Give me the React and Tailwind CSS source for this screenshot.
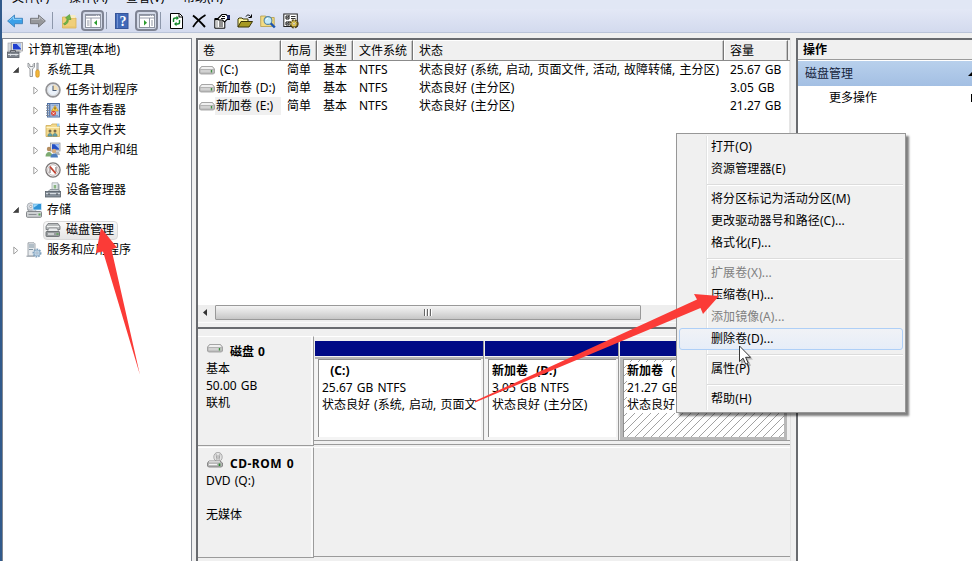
import React from "react";
import clsx from "clsx";

const volumes = [
    { name: " (C:)", status: "状态良好 (系统, 启动, 页面文件, 活动, 故障转储, 主分区)", size: "25.67 GB" },
    { name: "新加卷 (D:)", status: "状态良好 (主分区)", size: "3.05 GB" },
    { name: "新加卷 (E:)", status: "状态良好 (主分区)", size: "21.27 GB", selected: true },
];

const menuGroups = [
    [{ text: "打开(O)" }, { text: "资源管理器(E)" }],
    [{ text: "将分区标记为活动分区(M)" }, { text: "更改驱动器号和路径(C)..." }, { text: "格式化(F)..." }],
    [
        { text: "扩展卷(X)...", disabled: true },
        { text: "压缩卷(H)..." },
        { text: "添加镜像(A)...", disabled: true },
        { text: "删除卷(D)...", active: true },
    ],
    [{ text: "属性(P)" }],
    [{ text: "帮助(H)" }],
];

function Svg({ children, className = "w-4 h-4" }) {
    return (
        <svg viewBox="0 0 16 16" className={clsx("shrink-0", className)} fill="none">
            {children}
        </svg>
    );
}

/* ---------- tree icons ---------- */

const ComputerIcon = () => (
    <Svg>
        <rect x="4.5" y="0.5" width="11" height="8.5" fill="#e4e4dc" stroke="#9a9aa0" strokeWidth=".8" />
        <rect x="6" y="1.800" width="8" height="5.700" fill="#1f3fd0" />
        <path d="M9.500 1.800H14v5z" fill="#a9c4f8" />
        <rect x="1" y="1" width="3" height="8" fill="#d5d9dd" stroke="#9a9fa6" strokeWidth=".6" />
        <path d="M8 9h5l1.500 2H8z" fill="#c3c6cb" />
        <path d="M3.500 10V8.500h5V10" stroke="#5d6169" />
        <rect x="0.500" y="10" width="11.500" height="5.500" fill="#7f858e" stroke="#575c65" strokeWidth=".8" />
        <path d="M1 12.500h10.500M3.500 11.800v2M9 11.800v2" stroke="#dfe3e8" />
    </Svg>
);

const ToolsIcon = () => (
    <Svg>
        <path d="M2 1v4l2 2v7.500h2.500V7l2-2V1L7 2.500V4.500H3.800V2.500z" fill="#eceef0" stroke="#808488" strokeWidth=".8" />
        <path d="M10.800 1h1.400v7h-1.400z" fill="#c8ccd2" stroke="#85888d" strokeWidth=".6" />
        <rect x="9.800" y="8" width="3.400" height="7.200" rx="1.500" fill="#f3b73a" stroke="#c98a1c" strokeWidth=".7" />
    </Svg>
);

const ClockIcon = () => (
    <Svg>
        <circle cx="8" cy="8" r="6.900" fill="#fff" stroke="#949497" strokeWidth="1.700" />
        <circle cx="8" cy="8" r="5.500" fill="#eaf1f9" stroke="#c5c7ca" strokeWidth=".7" />
        <path d="M8 8h5.200A5.300 5.300 0 0 0 8 2.700z" fill="#f3dfb6" />
        <path d="M8 3.800V8.500H11.500" stroke="#51627a" strokeWidth="1.100" />
    </Svg>
);

const EventIcon = () => (
    <Svg>
        <rect x="2.500" y="1.500" width="12" height="13.500" fill="#b4c9e6" stroke="#4f70a4" />
        <path d="M4.800 2v12.500" stroke="#45669b" strokeWidth="1.100" />
        <path d="M1 3.500h3M1 6h3M1 8.500h3M1 11h3M1 13.500h3" stroke="#81868e" strokeWidth=".9" />
        <path d="M6.500 3.200h6.500M6.500 13.500h6.500" stroke="#6c8fc6" strokeWidth=".8" />
        <path d="M10 3.500l3.400 5.500H6.600z" fill="#ffd64a" stroke="#c48f20" strokeWidth=".6" />
        <path d="M10 5.300v2.200" stroke="#4a3300" />
        <circle cx="8.500" cy="11.300" r="2.500" fill="#d9473a" />
        <path d="M7.500 10.300l2 2m0-2l-2 2" stroke="white" strokeWidth=".8" />
    </Svg>
);

const SharedIcon = () => (
    <Svg>
        <path d="M1 3.500h5l1-1.500h5V4h2.500v10.500H1z" fill="#f3da8e" stroke="#cdab55" strokeWidth=".8" />
        <path d="M1.500 5.500h13" stroke="#fff3c4" />
        <path d="M12 1.500h2.500v3H12z" fill="#9ccbee" />
        <circle cx="5" cy="9" r="1.500" fill="#7a6a48" />
        <circle cx="10" cy="9" r="1.500" fill="#7a6a48" />
        <path d="M2.800 14.200c0-4 4.400-4 4.400 0zM7.800 14.200c0-4 4.400-4 4.400 0z" fill="#5fa3ae" stroke="#56736f" strokeWidth=".5" />
    </Svg>
);

const UsersIcon = () => (
    <Svg>
        <rect x="5.500" y="1" width="9.500" height="8" fill="#dfe1e5" stroke="#868a91" strokeWidth=".7" />
        <rect x="7" y="2.200" width="7" height="5.500" fill="#2450c5" />
        <path d="M9.500 2.200H14v4.500z" fill="#9dbff6" />
        <path d="M10 10h4l1 3h-5z" fill="#b1b5bb" />
        <circle cx="4" cy="7" r="2.200" fill="#b58e60" />
        <path d="M0.500 14.500c0-6 7-6 7 0z" fill="#7dab72" />
        <circle cx="9" cy="9" r="2.200" fill="#d6aa7c" />
        <path d="M5.500 15.500c0-5.500 7.500-5.500 7.500 0z" fill="#4c7cbd" />
    </Svg>
);

const PerfIcon = () => (
    <Svg>
        <circle cx="8" cy="8" r="7.100" fill="#fafafa" stroke="#7c7777" strokeWidth="1.300" />
        <circle cx="8" cy="8" r="5.300" fill="#fff" stroke="#b5aaaa" strokeWidth=".8" />
        <path d="M5 11V6M11 10V5" stroke="#8a7c7c" strokeWidth="1.200" />
        <path d="M4.800 4.500l6 7" stroke="#c2402f" strokeWidth="1.900" />
    </Svg>
);

const DeviceIcon = () => (
    <Svg>
        <path d="M7 0.800h6v8H7z" fill="#e4ebed" stroke="#9aa1a4" strokeWidth=".7" />
        <path d="M13 1.500l1.500.8v6.500H13z" fill="#9ca5ad" />
        <path d="M8.700 3h2.500v3.500H8.700z" fill="#8ab581" />
        <path d="M3 9.500L5 7.500h8l2.500 2z" fill="#c7ced3" stroke="#737b84" strokeWidth=".7" />
        <rect x="0.500" y="9.500" width="15" height="5.500" fill="#87919b" stroke="#59616a" strokeWidth=".8" />
        <path d="M1 11.500h14" stroke="#d6dce1" />
        <path d="M4 11v2M12 11v2" stroke="#444a51" />
    </Svg>
);

const StorageIcon = () => (
    <Svg>
        <rect x="0.500" y="9.500" width="15" height="5.800" rx="1" fill="#cdd0d2" stroke="#777b7f" strokeWidth=".9" />
        <rect x="1.500" y="3.500" width="9" height="5.500" rx="2" fill="#dee1e4" stroke="#868b90" strokeWidth=".8" />
        <circle cx="4.800" cy="4.500" r="3.700" fill="#d8dbe0" stroke="#9a9fa6" strokeWidth=".7" />
        <circle cx="4.800" cy="4.500" r="1.100" fill="#fff" stroke="#888" strokeWidth=".6" />
        <rect x="7" y="1.500" width="8.500" height="6.500" fill="#2f93d6" stroke="#d9ecf9" strokeWidth=".8" />
        <path d="M7.600 2.300h5l-5 3.500z" fill="#9bd6f7" />
        <path d="M2.500 12.500h8" stroke="#888d92" />
        <rect x="12.500" y="11.500" width="2" height="2" fill="#57a353" />
    </Svg>
);

const DiskMgmtIcon = () => (
    <Svg>
        <path d="M3 1.500h10l2 3v3H1v-3z" fill="#b4b8b9" stroke="#707477" strokeWidth=".8" />
        <path d="M2 4.500h12" stroke="#f0f2f2" strokeWidth="1.200" />
        <path d="M4 6l-2 4h12l-2-4z" fill="#e8eaeb" stroke="#7e8285" strokeWidth=".7" />
        <rect x="1" y="9.500" width="13.500" height="5" rx=".8" fill="#989c9e" stroke="#616568" strokeWidth=".8" />
        <path d="M3 12h6" stroke="#e5e7e8" strokeWidth="1.400" />
        <path d="M11.500 12h2" stroke="#5aa852" strokeWidth="1.400" />
    </Svg>
);

const ServicesIcon = () => (
    <Svg>
        <path d="M2 .8h6l1 1V14H2z" fill="#e6eaed" stroke="#8b9299" strokeWidth=".8" />
        <path d="M3 3h5M3 5h5M3 7.500h4" stroke="#7f93a2" />
        <path d="M.5 13.500h8v1.500h-8z" fill="#adb3b9" />
        <circle cx="11" cy="11" r="3.500" fill="#c4dbed" stroke="#7f9fbc" strokeWidth="2" strokeDasharray="1.600 1" />
        <circle cx="11" cy="11" r="2.900" fill="#c7dced" stroke="#86a7c2" strokeWidth=".7" />
        <circle cx="11" cy="11" r="1.100" fill="white" stroke="#6f8ba4" strokeWidth=".6" />
    </Svg>
);

const DriveIcon = () => (
    <Svg>
        <path d="M2.500 4.500h11l2 2.500v4l-1 1h-13l-1-1V7z" fill="#c4c4c4" stroke="#979797" strokeWidth=".8" />
        <path d="M3 5h10l1.500 2h-13z" fill="#f0f0f0" />
        <rect x="1" y="7.500" width="14" height="3.500" rx="1" fill="#d2d2d2" stroke="#a3a3a3" strokeWidth=".6" />
        <path d="M12.500 8v2.500" stroke="#3f8f41" strokeWidth="1.400" />
    </Svg>
);

const CdIcon = () => (
    <Svg>
        <ellipse cx="11" cy="5" rx="4.200" ry="4.700" fill="#e4e4e4" stroke="#999" strokeWidth=".8" />
        <path d="M9 1.500l1 7M13 1.500l-1 7" stroke="#b0b0b0" />
        <circle cx="11" cy="5" r="1.200" fill="#fff" stroke="#888" strokeWidth=".7" />
        <path d="M2 9h11l2.500 2v3l-1 1h-13l-1-1v-3z" fill="#b4b4b4" stroke="#757575" strokeWidth=".8" />
        <path d="M2 9.800h11" stroke="#eee" />
        <path d="M2 12.500h8" stroke="#f4f4f4" strokeWidth="1.200" />
        <path d="M12.500 11.500v2.500" stroke="#26852c" strokeWidth="1.600" />
    </Svg>
);

/* ---------- toolbar icons ---------- */

const BackIcon = () => (
    <Svg>
        <path d="M0.600 8L7.500 2v3.300h8v5.400h-8V14z" fill="#3ba0e8" stroke="#3f83bd" strokeWidth=".9" />
        <path d="M2.500 7.500l4-3.500v2.400h8" stroke="#8fd2fb" />
    </Svg>
);

const ForwardIcon = () => (
    <Svg>
        <path d="M15.400 8L8.500 2v3.300h-8v5.400h8V14z" fill="#96979b" stroke="#727377" strokeWidth=".9" />
        <path d="M13.500 7.500l-4-3.500v2.400h-8" stroke="#bfc0c4" />
    </Svg>
);

const UpFolderIcon = () => (
    <Svg>
        <path d="M1.500 4h4l1 1H15v10H1.500z" fill="#f0cf7a" stroke="#d9b055" strokeWidth=".8" />
        <path d="M9 2h5.500v3H9z" fill="#f8edc4" />
        <path d="M3.500 12c3-1 4-3 3.800-5.500H10L8.500 1.500 4.500 4.800l1.500.8c0 2.500-1 4-3.500 5z" fill="#6fb548" stroke="#4d9435" strokeWidth=".6" />
        <path d="M2 14h12.500" stroke="#e6c067" />
    </Svg>
);

const PaneIcon = ({ right }) => (
    <Svg>
        <rect x=".5" y="1.500" width="15" height="13" fill="#fff" stroke="#8d93a0" />
        <path d="M1 2.500h14M1 5h14" stroke="#979cab" />
        <path d="M11 3h1m1 0h1" stroke="#fff" />
        <path d={right ? "M10.500 5v9.500M12 8h2M12 10h2M12 12h2" : "M6 5v9.500M2 8h2.500M2 10h2.500M2 12h2.500"} stroke="#9197a5" />
        <path d={right ? "M5 7v5.500L8 9.800z" : "M12 7v5.500L9 9.800z"} fill="#2b9c2e" />
    </Svg>
);

const HelpIcon = () => (
    <Svg>
        <rect x="1.500" y=".5" width="12.500" height="15" fill="#4169b8" stroke="#36559a" />
        <path d="M3.500 1v14" stroke="#6f90d2" />
        <text x="9" y="13" textAnchor="middle" fontFamily="Liberation Serif" fontSize="14" fontWeight="bold" fill="white">?</text>
    </Svg>
);

const RefreshIcon = () => (
    <Svg>
        <path d="M2.500.5h9l3 3v12h-12z" fill="#fff" stroke="#000" />
        <path d="M11 .5V4h3.500" stroke="#000" />
        <path d="M5.500 9V6.500c0-1 .8-1.500 2-1.500H9M11.500 7v2.500c0 1-1 1.500-2 1.500H8" stroke="#14872a" strokeWidth="1.400" />
        <path d="M8.500 2.800v4.400L11 5zM8.500 8.800v4.400L6 11z" fill="#14872a" />
    </Svg>
);

const DeleteIcon = () => (
    <Svg>
        <path d="M2 2.500c4 3 8 7 12 11.500" stroke="#000" strokeWidth="1.900" />
        <path d="M14.500 2C9.500 5 5 9 2 14" stroke="#000" strokeWidth="1.600" />
    </Svg>
);

const PropsIcon = () => (
    <Svg>
        <path d="M.8 5.500h10v9.700h-10z" fill="#fff" stroke="#000" />
        <path d="M1 6.500h9" stroke="#000" strokeWidth="1.400" />
        <path d="M2.500 9h1m1.500 0h4M2.500 11h1m1.500 0h4M2.500 13h1m1.500 0h4" stroke="#222" />
        <path d="M4 5.500L8 1.500h4l1 1h3v4h-3L10.500 9 8.500 7 5 7z" fill="#fff" stroke="#000" strokeWidth="1.100" />
        <path d="M8 3.500h3M7 5.500h4" stroke="#000" />
        <path d="M13 2h3v4h-3z" fill="#222b66" />
    </Svg>
);

const OpenIcon = () => (
    <Svg>
        <path d="M1 14V6l1-1h3l1 1h5v2.500" fill="#fff79c" stroke="#3b3608" />
        <path d="M1 14l3-5.500h11.500L12 14z" fill="#a69921" stroke="#3b3608" />
        <path d="M9 3.500c1-2 3.500-2 5 .5M14.500 1.500v3H11.500" stroke="#000" />
    </Svg>
);

const FindIcon = () => (
    <Svg>
        <path d="M.7 13.500V3h5l1 1.500h7.500v9z" fill="#f3db83" stroke="#b39c46" strokeWidth=".8" />
        <circle cx="8" cy="7.500" r="3.900" fill="#c4ebfb" stroke="#5685a2" strokeWidth="1.100" />
        <path d="M6 6.500l2-1.500" stroke="#fff" />
        <path d="M10.800 10.300l4 4.200" stroke="#1d55b0" strokeWidth="2.400" />
    </Svg>
);

const SettingsIcon = () => (
    <Svg>
        <rect x=".8" y="1" width="13.500" height="12.500" fill="#fff" stroke="#222" />
        <path d="M3 3h3v3H3zM3 9h3v3H3z" stroke="#111" />
        <path d="M3.500 4l1 1 2-3M3.500 10l1 1 2-3M8 3.500h4.500M8 5.500h4.500" stroke="#333" />
        <circle cx="11" cy="10.800" r="3.500" stroke="#5b4b15" strokeWidth="2.300" strokeDasharray="1.800 1" />
        <circle cx="11" cy="10.800" r="3" fill="#f0d75c" stroke="#7d681f" strokeWidth=".8" />
        <circle cx="11" cy="10.800" r="1.200" fill="white" stroke="#6f5b1b" strokeWidth=".5" />
    </Svg>
);

const tree = [
    { text: "系统工具", icon: <ToolsIcon />, level: 1, open: true },
    { text: "任务计划程序", icon: <ClockIcon />, level: 2, arrow: true },
    { text: "事件查看器", icon: <EventIcon />, level: 2, arrow: true },
    { text: "共享文件夹", icon: <SharedIcon />, level: 2, arrow: true },
    { text: "本地用户和组", icon: <UsersIcon />, level: 2, arrow: true },
    { text: "性能", icon: <PerfIcon />, level: 2, arrow: true },
    { text: "设备管理器", icon: <DeviceIcon />, level: 2 },
    { text: "存储", icon: <StorageIcon />, level: 1, open: true },
    { text: "磁盘管理", icon: <DiskMgmtIcon />, level: 2, selected: true },
    { text: "服务和应用程序", icon: <ServicesIcon />, level: 1, arrow: true },
];

function TreeRow({ item }) {
    return (
        <div className={clsx("flex h-5 items-center", item.level === 1 ? "pl-1.5" : "pl-[26px]")}>
            <div className={clsx("flex shrink-0 justify-center", item.level === 1 ? "w-[14px]" : "w-[13px]")}>
                {item.open && (
                    <svg viewBox="0 0 7 7" className="h-1.5 w-1.5">
                        <path d="M6.500.5v6h-6z" fill="#404040" stroke="#222" strokeWidth=".6" />
                    </svg>
                )}
                {item.arrow && (
                    <svg viewBox="0 0 6 9" className="h-[9px] w-1.5">
                        <path d="M.8 1v7l4-3.500z" fill="#fff" stroke="#a0a0a0" />
                    </svg>
                )}
            </div>
            <div className={clsx("flex h-[19px] items-center rounded-sm border pl-px pr-[3px]",
                item.selected ? "border-[#d9d9d9] bg-linear-to-b from-[#fafafa] to-[#e6e6e6]" : "border-transparent",
                item.level === 1 ? "ml-px" : "ml-px")}>
                {item.icon}
                <span className="ml-[5px]">{item.text}</span>
            </div>
        </div>
    );
}

function Toolbar() {
    return (
        <div className="flex h-[23px] shrink-0 items-center bg-linear-to-b from-[#e3e8f6] to-[#d3daee] pl-[5px]">
            <BackIcon />
            <div className="ml-[7px]"><ForwardIcon /></div>
            <Divider className="ml-1.5" />
            <div className="ml-2"><UpFolderIcon /></div>
            <Toggle><PaneIcon /></Toggle>
            <Divider className="ml-[2px]" />
            <div className="ml-[7px]"><HelpIcon /></div>
            <Toggle className="ml-[5px]"><PaneIcon right /></Toggle>
            <Divider className="ml-[2px]" />
            <div className="ml-[7px] flex gap-[7px]">
                <RefreshIcon />
                <DeleteIcon />
                <PropsIcon />
                <OpenIcon />
                <FindIcon />
                <SettingsIcon />
            </div>
        </div>
    );
}

const Divider = ({ className }) => <div className={clsx("h-[17px] w-px shrink-0 bg-[#8d97ab]", className)} />;

const Toggle = ({ children, className = "ml-1" }) => (
    <div className={clsx("flex h-[21px] w-[23px] shrink-0 items-center justify-center rounded-[4px] border-2 border-[#7f8494] bg-[#d3d9e8]", className)}>
        {children}
    </div>
);

function VolumeTable() {
    const cols = "grid grid-cols-[83px_36px_36px_60px_311px_64px_1fr]";
    return (
        <div className="flex h-[291px] shrink-0 flex-col border-l-2 border-t-2 border-b-2 border-[#696b6f] bg-[#f0f0f0]">
            <div className={clsx(cols, "h-[21px] shrink-0 border-b border-[#8b8b8b] bg-[#f0f0f0]")}>
                {["卷", "布局", "类型", "文件系统", "状态", "容量"].map((h) => (
                    <div key={h} className="flex items-center border-l border-t border-r border-l-white border-t-white border-r-[#777] pl-1 pt-px shadow-[inset_-1px_0_0_#c4c4c4]">
                        <span className={h === "卷" ? "" : "pl-px"}>{h}</span>
                    </div>
                ))}
            </div>
            <div className="grow border-r border-[#e5e5e5] bg-white">
                {volumes.map((v) => (
                    <div key={v.size} className={clsx(cols, "h-[18px] items-center")}>
                        <div className="flex h-full items-center pl-px">
                            <DriveIcon />
                            <span className={clsx("grow whitespace-pre pl-px leading-[18px]", v.selected && "bg-[#f0f0f0]")}>{v.name}</span>
                        </div>
                        <span className="pl-1.5">简单</span>
                        <span className="pl-1.5">基本</span>
                        <span className="pl-1.5">NTFS</span>
                        <span className="pl-1.5">{v.status}</span>
                        <span className="whitespace-nowrap pl-1.5">{v.size}</span>
                    </div>
                ))}
            </div>
            <div className="flex h-4 shrink-0 items-start bg-[#eeeeee]">
                <div className="flex h-[15px] w-[17px] items-center justify-center pr-1">
                    <svg viewBox="0 0 4 7" className="h-[7px] w-1"><path d="M4 0v7L0 3.500z" fill="#333" /></svg>
                </div>
                <div className="flex h-[15px] w-[426px] items-center justify-center gap-px rounded-[1px] border border-[#999] bg-linear-to-b from-[#f4f4f4] via-[#dedede] to-[#c6c6c6]">
                    <i className="h-[7px] w-0.5 border-r border-white bg-[#666]" />
                    <i className="h-[7px] w-0.5 border-r border-white bg-[#666]" />
                    <i className="h-[7px] w-0.5 border-r border-white bg-[#666]" />
                </div>
            </div>
            <div className="mt-px h-[5px] shrink-0 border-t border-[#fafafa]" />
        </div>
    );
}

const Hatch = () => (
    <svg className="absolute inset-0 h-full w-full">
        <defs>
            <pattern id="hatch" width="8" height="8" patternUnits="userSpaceOnUse">
                <path d="M-1 9L9 -1M-1 1L1 -1M7 9L9 7" stroke="#8a8a8a" strokeWidth=".8" />
            </pattern>
        </defs>
        <rect width="100%" height="100%" fill="url(#hatch)" />
    </svg>
);

function Partition({ name, size, status, className, selected }) {
    return (
        <div className={clsx("flex shrink-0 flex-col overflow-hidden", className)}>
            <div className="h-[15px] shrink-0 bg-[#000a86]" />
            <div className={clsx("mt-px flex grow flex-col border-t-2 pl-[3px]",
                selected ? "border-[#b8b8b8] bg-[#b8b8b8] pb-[3px] pr-[3px]" : "border-[#b4b4b4] bg-[#f4f4f4] pb-[3px] pr-0.5")}>
                <div className="relative grow overflow-hidden whitespace-pre border-l border-t border-[#8f8f8f] bg-white pl-[3px] pt-[2px] leading-[17px]">
                    {selected && <Hatch />}
                    <div className={clsx("relative", selected && "bg-white")}>
                        <div className="font-bold">{name}</div>
                        <div>{size} NTFS</div>
                        <div>{status}</div>
                    </div>
                </div>
            </div>
        </div>
    );
}

function DiskView() {
    return (
        <div className="flex grow flex-col border-l-2 border-[#696b6f] bg-[#f0f0f0] pt-[7px]">
            <div className="flex h-[110px] shrink-0">
                <div className="w-[116px] shrink-0 border-b border-r border-t border-b-[#9b9b9b] border-r-[#9b9b9b] border-t-white pl-2 pt-1.5 leading-[17px] shadow-[inset_-2px_0_0_#fafafa]">
                    <div className="flex h-[17px] font-bold">
                        <div className="-mt-[3px] ml-px"><DriveIcon /></div>
                        <span className="ml-[7px]">磁盘 0</span>
                    </div>
                    <div>基本</div>
                    <div>50.00 GB</div>
                    <div>联机</div>
                </div>
                <div className="h-[109px] grow border-b border-t border-b-[#9b9b9b] border-t-white pt-1">
                    <div className="flex h-[100px] border-b border-[#9b9b9b] pl-px">
                        <Partition name="  (C:)" size="25.67 GB" status="状态良好 (系统, 启动, 页面文" className="w-[169px] border-r border-[#999]" />
                        <Partition name="新加卷  (D:)" size="3.05 GB" status="状态良好 (主分区)" className="ml-px w-[134px] border-r border-[#999]" />
                        <Partition name="新加卷  (E:)" size="21.27 GB" status="状态良好" className="ml-px w-[167px]" selected />
                    </div>
                </div>
            </div>
            <div className="mt-px flex h-[111px] shrink-0">
                <div className="w-[116px] shrink-0 border-b border-r border-t border-b-[#9b9b9b] border-r-[#9b9b9b] border-t-white pl-2 pt-[7px] leading-[17px] shadow-[inset_-2px_0_0_#fafafa]">
                    <div className="flex h-[17px] font-bold">
                        <div className="-mt-[3px] ml-px"><CdIcon /></div>
                        <span className="ml-[7px] whitespace-nowrap tracking-[0.5px]">CD-ROM 0</span>
                    </div>
                    <div>DVD (Q:)</div>
                    <div className="pt-[17px]">无媒体</div>
                </div>
                <div className="h-[110px] grow border-b border-t border-b-[#9b9b9b] border-t-white" />
            </div>
        </div>
    );
}

function ContextMenu() {
    return (
        <div className="absolute left-[674px] top-[133px] h-[280px] w-[230px] border border-[#979797] bg-[#f0f0f0] p-[2px] shadow-[3px_3px_2px_rgba(0,0,0,0.5)]">
            <div className="h-full bg-[linear-gradient(to_right,transparent_27px,#e2e3e3_27px,#e2e3e3_28px,#fff_28px,#fff_29px,transparent_29px)]">
                {menuGroups.map((group, i) => (
                    <div key={i}>
                        {i > 0 && (
                            <div className="flex h-2 items-center pl-7 pt-px">
                                <div className="h-0.5 grow border-b border-white bg-[#dcdcdc]" />
                            </div>
                        )}
                        {group.map((item) => (
                            <div key={item.text} className={clsx("flex h-[22px] items-center rounded-[3px] border pl-[31px] tracking-[0.1px]",
                                item.active ? "border-[#aecff7] bg-linear-to-b from-[#f0f2f6] to-[#e6edf8]" : "border-transparent",
                                item.disabled && "text-[#808080]")}>
                                {item.text}
                            </div>
                        ))}
                    </div>
                ))}
            </div>
        </div>
    );
}

export default function App() {
    return (
        <div className="relative flex h-[561px] w-[972px] overflow-hidden border-l-2 border-[#315a8c] bg-[#f0f0f0] font-['Noto_Sans','Noto_Sans_CJK_SC',sans-serif] text-[12px] leading-4 text-black">
            <div className="flex w-full min-w-0 flex-col">
                <div className="flex h-[9px] shrink-0 items-end gap-[17px] bg-[#e1e7f5] pl-2.5">
                    {["文件(F)", "操作(A)", "查看(V)", "帮助(H)"].map((m) => (
                        <span key={m} className="relative -top-[3px] w-10 whitespace-nowrap">{m}</span>
                    ))}
                </div>
                <Toolbar />
                <div className="h-1.5 shrink-0 border-t border-[#bac4d9] bg-[#f0f0f0]" />

                <div className="flex min-h-0 grow">
                    <div className="w-[190px] shrink-0 border-l border-r border-t border-[#828790] bg-white pt-px">
                        <div className="flex h-5 items-center pl-1">
                            <ComputerIcon />
                            <span className="ml-[5px] tracking-[0.1px]">计算机管理(本地)</span>
                        </div>
                        {tree.map((item) => <TreeRow key={item.text} item={item} />)}
                    </div>

                    <div className="ml-1 flex w-[595px] shrink-0 flex-col border-r border-[#e2e2e2] [word-spacing:1px]">
                        <VolumeTable />
                        <DiskView />
                    </div>

                    <div className="ml-[5px] grow overflow-hidden border-l-2 border-t-2 border-[#696b6f] bg-white">
                        <div className="flex h-5 items-center border-b border-[#9b9b9b] bg-[#f0f0f0] pl-[5px] pt-px font-bold">操作</div>
                        <div className="mt-px flex h-[25px] items-center justify-between bg-linear-to-b from-[#b8d0ec] to-[#a3bfe3] pl-[7px] text-[#15243c]">
                            磁盘管理
                            <svg viewBox="0 0 4 4" className="h-1 w-1"><path d="M4 0v4H0z" /></svg>
                        </div>
                        <div className="flex h-6 items-center justify-between pl-[31px]">
                            更多操作
                            <div className="h-2 w-px bg-black" />
                        </div>
                    </div>
                </div>
            </div>

            <ContextMenu />

            {/* annotation arrows and the mouse pointer */}
            <svg className="pointer-events-none absolute -left-0.5 top-0 h-[561px] w-[972px]" viewBox="0 0 972 561">
                <path d="M475 401L697 299.500L694 294L719 296L703 314L700.500 308L475 402.500Z" fill="#fb3b37" />
                <path d="M140 375L103 251.500L96 253L101 228L117 247.500L111.500 249.500Z" fill="#fb3b37" />
                <path d="M741 348v17l4-4 3 6 3-1.500-3-6h5z" fill="#000" opacity=".25" />
                <path d="M739.500 346v15.500l3.600-3.300 2.600 6 2.500-1.200-2.600-5.700h5z" fill="#fff" stroke="#222" strokeWidth=".9" />
            </svg>
        </div>
    );
}
